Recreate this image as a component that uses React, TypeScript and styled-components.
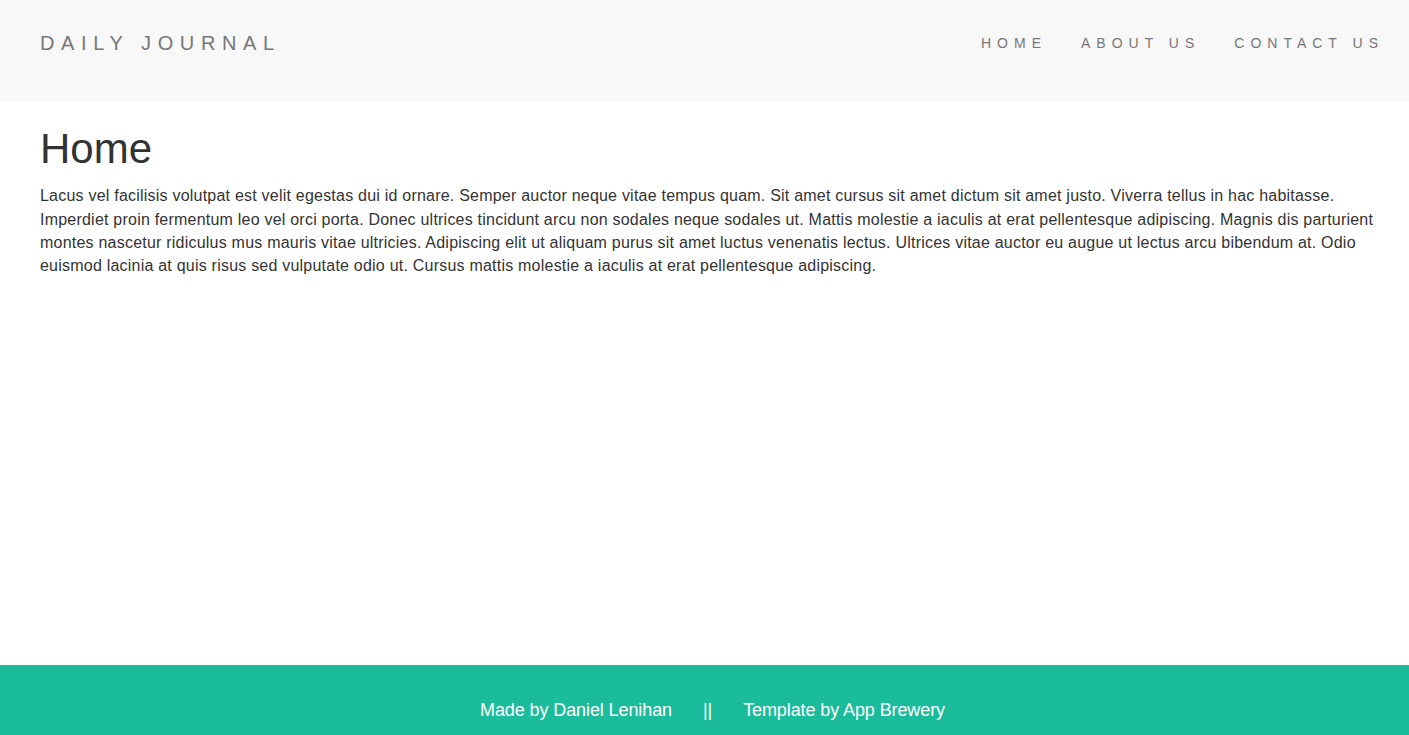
import styled, { createGlobalStyle } from "styled-components";

const GlobalStyle = createGlobalStyle`
  html, body {
    margin: 0;
    padding: 0;
  }
  body {
    font-family: "Liberation Sans", Arial, sans-serif;
    color: #333;
    background: #fff;
  }
  * {
    box-sizing: border-box;
  }
`;

const navLinks = ["Home", "About Us", "Contact Us"];

const paragraph =
  "Lacus vel facilisis volutpat est velit egestas dui id ornare. Semper auctor neque vitae tempus quam. Sit amet cursus sit amet dictum sit amet justo. Viverra tellus in hac habitasse. Imperdiet proin fermentum leo vel orci porta. Donec ultrices tincidunt arcu non sodales neque sodales ut. Mattis molestie a iaculis at erat pellentesque adipiscing. Magnis dis parturient montes nascetur ridiculus mus mauris vitae ultricies. Adipiscing elit ut aliquam purus sit amet luctus venenatis lectus. Ultrices vitae auctor eu augue ut lectus arcu bibendum at. Odio euismod lacinia at quis risus sed vulputate odio ut. Cursus mattis molestie a iaculis at erat pellentesque adipiscing.";

const App = () => {
  return (
    <Page>
      <GlobalStyle />
      <Navbar>
        <Brand href="#">Daily Journal</Brand>
        <NavList>
          {navLinks.map((link) => (
            <li key={link}>
              <NavLink href="#">{link}</NavLink>
            </li>
          ))}
        </NavList>
      </Navbar>
      <Main>
        <Title>Home</Title>
        <Text>{paragraph}</Text>
      </Main>
      <Footer>
        <FooterText>Made by Daniel Lenihan</FooterText>
        <FooterText>||</FooterText>
        <FooterText>Template by App Brewery</FooterText>
      </Footer>
    </Page>
  );
};

export default App;

const Page = styled.div`
  min-height: 100vh;
  display: flex;
  flex-direction: column;
`;

const Navbar = styled.nav`
  height: 102px;
  background: #f8f8f8;
  display: flex;
  align-items: center;
  justify-content: space-between;
  padding: 0 25px 16px 40px;
`;

const Brand = styled.a`
  font-size: 20px;
  letter-spacing: 6.6px;
  text-transform: uppercase;
  color: #777;
  text-decoration: none;
`;

const NavList = styled.ul`
  list-style: none;
  margin: 0;
  padding: 0;
  display: flex;
  gap: 34px;
`;

const NavLink = styled.a`
  font-size: 14px;
  letter-spacing: 6px;
  text-transform: uppercase;
  color: #777;
  text-decoration: none;
`;

const Main = styled.main`
  flex: 1;
  padding: 0 30px 0 40px;
`;

const Title = styled.h1`
  font-size: 42px;
  font-weight: 400;
  line-height: 1.1;
  margin: 24px 0 12px;
  color: #333;
`;

const Text = styled.p`
  font-size: 16px;
  line-height: 23.4px;
  letter-spacing: 0.22px;
  margin: 0;
  color: #333;
`;

const Footer = styled.footer`
  height: 70px;
  background: #1abc9c;
  display: flex;
  justify-content: center;
  gap: 31px;
  padding: 35px 0 0 16px;
`;

const FooterText = styled.span`
  font-size: 18px;
  line-height: 20px;
  letter-spacing: -0.1px;
  color: #fff;
`;
